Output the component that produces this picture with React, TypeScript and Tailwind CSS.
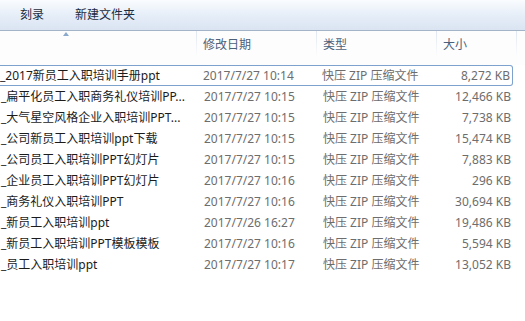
const files = [
  { name: "_2017新员工入职培训手册ppt", date: "2017/7/27 10:14", size: "8,272 KB" },
  { name: "_扁平化员工入职商务礼仪培训PP...", date: "2017/7/27 10:15", size: "12,466 KB" },
  { name: "_大气星空风格企业入职培训PPT...", date: "2017/7/27 10:15", size: "7,738 KB" },
  { name: "_公司新员工入职培训ppt下载", date: "2017/7/27 10:15", size: "15,474 KB" },
  { name: "_公司员工入职培训PPT幻灯片", date: "2017/7/27 10:15", size: "7,883 KB" },
  { name: "_企业员工入职培训PPT幻灯片", date: "2017/7/27 10:16", size: "296 KB" },
  { name: "_商务礼仪入职培训PPT", date: "2017/7/27 10:16", size: "30,694 KB" },
  { name: "_新员工入职培训ppt", date: "2017/7/26 16:27", size: "19,486 KB" },
  { name: "_新员工入职培训PPT模板模板", date: "2017/7/27 10:16", size: "5,594 KB" },
  { name: "_员工入职培训ppt", date: "2017/7/27 10:17", size: "13,052 KB" },
];

function HeaderCell({ label, width }: { label: string; width: string }) {
  return (
    <div className={`relative flex h-full items-center pl-[6px] ${width}`}>
      <span className="pb-[6px] text-[#4c607a]">{label}</span>
      <div className="absolute right-0 top-0 h-[26px] w-px bg-gradient-to-b from-[#dfe7f1] to-transparent" />
    </div>
  );
}

export default function App() {
  return (
    <div
      className="h-[321px] w-[525px] overflow-hidden bg-white text-[12px] leading-none"
      style={{ fontFamily: '"Segoe UI", "Noto Sans", "Noto Sans CJK SC", sans-serif' }}
    >
      <div className="flex h-[31px] items-center gap-[31px] border-b border-[#a3b3c8] bg-gradient-to-b from-[#fafcfe] via-[#e6eef8] to-[#dae4f2] pl-[20px] text-[#1e2b3c]">
        <span className="pb-[1px]">刻录</span>
        <span className="pb-[1px]">新建文件夹</span>
      </div>

      <div className="relative flex h-[34px] bg-[#fdfdfd]">
        <div className="relative h-full w-[197px]">
          <div className="absolute left-[63px] top-[1px] h-0 w-0 border-x-[3.5px] border-b-[4px] border-x-transparent border-b-[#8aa9cc]" />
          <div className="absolute right-0 top-0 h-[26px] w-px bg-gradient-to-b from-[#dfe7f1] to-transparent" />
        </div>
        <HeaderCell label="修改日期" width="w-[120px]" />
        <HeaderCell label="类型" width="w-[120px]" />
        <HeaderCell label="大小" width="w-[80px]" />
      </div>

      <div className="flex flex-col">
        {files.map((f, i) => (
          <div
            key={f.name}
            className={`flex h-[21px] w-[513px] items-center whitespace-nowrap ${
              i === 0 ? "rounded-r-[3px] border border-l-0 border-[#7da2ce]" : "border border-transparent"
            }`}
          >
            <div className="w-[197px] text-[#1b1b1b]">{f.name}</div>
            <div className="w-[120px] pl-[6px] text-[#6d6d6d]">{f.date}</div>
            <div className="w-[120px] pl-[5px] text-[#6d6d6d]">快压 ZIP 压缩文件</div>
            <div className="w-[73px] text-right text-[#6d6d6d]">{f.size}</div>
          </div>
        ))}
      </div>
    </div>
  );
}
